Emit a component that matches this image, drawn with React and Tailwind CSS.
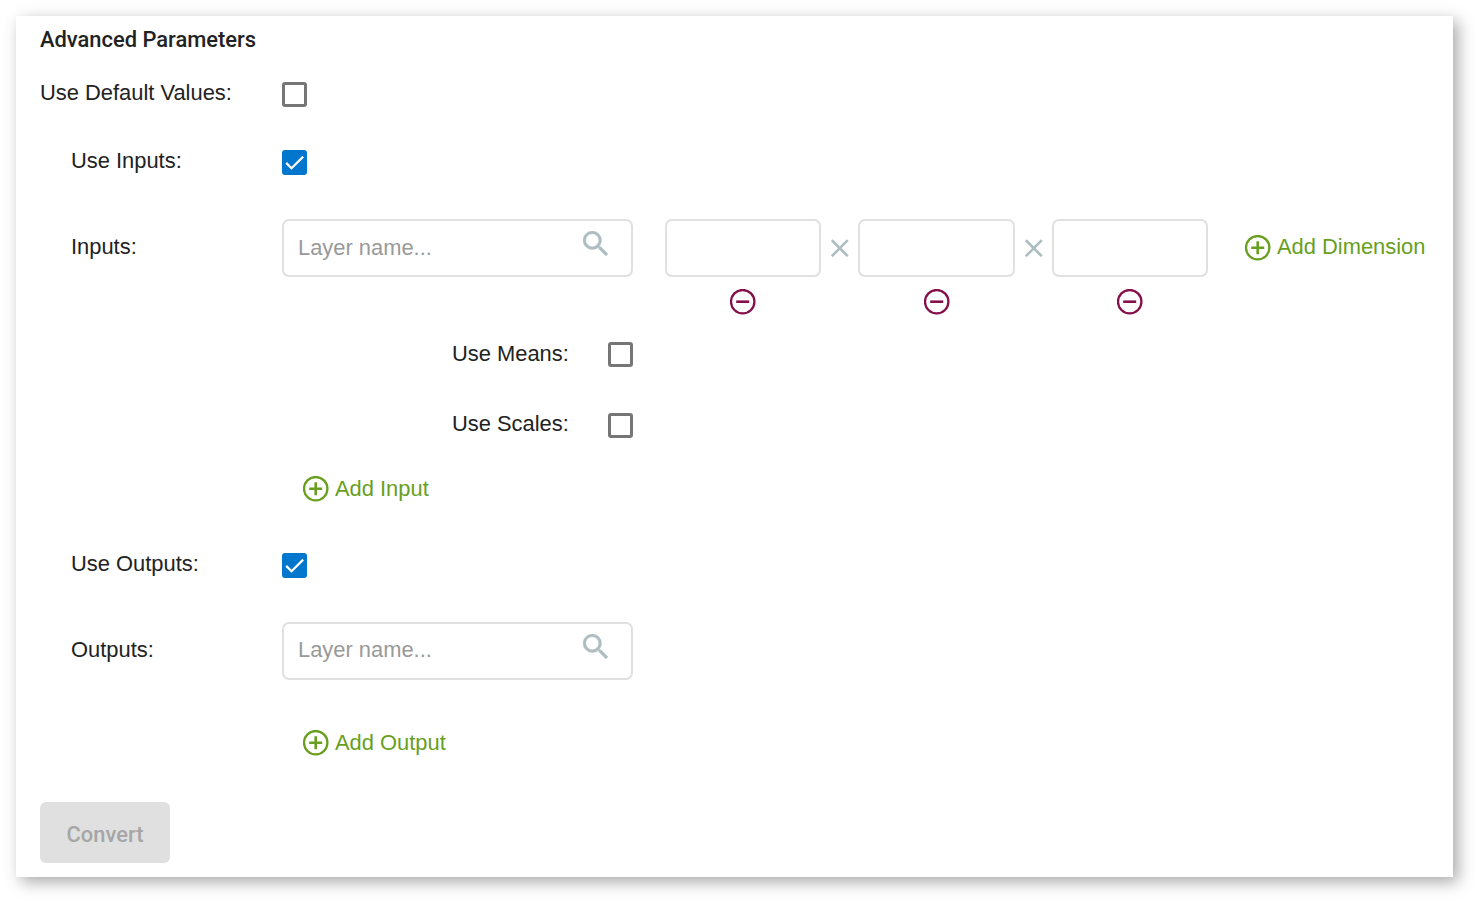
import React from "react";

function Checkbox({ checked }) {
  return checked ? (
    <span role="checkbox" aria-checked="true" className="flex size-[25px] shrink-0 items-center justify-center rounded-[3px] bg-[#0077cc]">
      <svg viewBox="0 0 25 25" className="size-[25px]" fill="none" stroke="#fff" strokeWidth="2.2">
        <path d="M4.2 12.9 9.5 18.2 21.2 6.6" />
      </svg>
    </span>
  ) : (
    <span role="checkbox" aria-checked="false" className="block size-[25px] shrink-0 rounded-[3px] border-3 border-[#767676] bg-white" />
  );
}

function CircleIcon({ plus }) {
  return (
    <svg viewBox="0 0 26 26" className="size-[26px] shrink-0" fill="none" stroke="currentColor">
      <circle cx="12.7" cy="12.7" r="11.7" strokeWidth="2.3" />
      <path d={plus ? "M6.2 12.7h13M12.7 6.2v13" : "M6.2 12.7h13"} strokeWidth="2.6" />
    </svg>
  );
}

function AddButton({ className = "", children }) {
  return (
    <button className="flex items-center gap-[6px] text-[#689f1e]">
      <CircleIcon plus />
      <span className={`whitespace-nowrap ${className}`}>{children}</span>
    </button>
  );
}

function Times() {
  return (
    <svg viewBox="0 0 18 18" className="size-[18px] shrink-0" fill="none" stroke="#aebdc2" strokeWidth="2.6">
      <path d="M.8 1.2 16.8 17.2M16.8 1.2.8 17.2" />
    </svg>
  );
}

function LayerField({ className = "" }) {
  return (
    <div className="flex h-[58px] w-[351px] shrink-0 items-center justify-between rounded-[7px] border-2 border-[#e0e0e0] pr-[23px] pl-[14px]">
      <span className={`text-[#999] ${className}`}>Layer name...</span>
      <svg viewBox="3 3 17.49 17.49" className="mb-[10px] size-[25px]" fill="#aebdc2" stroke="#aebdc2" strokeWidth="0.25">
        <path d="M15.5 14h-.79l-.28-.27A6.471 6.471 0 0 0 16 9.5 6.5 6.5 0 1 0 9.5 16c1.61 0 3.09-.59 4.23-1.57l.27.28v.79l5 4.99L20.49 19l-4.99-5zm-6 0C7.01 14 5 11.99 5 9.5S7.01 5 9.5 5 14 7.01 14 9.5 11.99 14 9.5 14z" />
      </svg>
    </div>
  );
}

function Label({ className, children }) {
  return (
    <div className={className}>
      <span className="whitespace-nowrap">{children}</span>
    </div>
  );
}

const DIMENSIONS = ["w-[156px]", "w-[157px]", "w-[156px]"];

export default function App() {
  return (
    <div className="h-[901px] w-[1477px] overflow-hidden bg-white p-4 font-['Liberation_Sans',Arial,sans-serif] text-[21.9px] leading-[26px] text-[#222]">
      <main className="h-[861px] w-[1437px] bg-white px-6 shadow-[5px_5px_15px_rgba(0,0,0,0.34)]">
        <h1 className="flex h-12 items-center font-[Roboto,sans-serif] font-medium">Advanced Parameters</h1>

        <div className="flex h-[61px] items-center">
          <Label className="w-[242px] pb-1">Use Default Values:</Label>
          <Checkbox />
        </div>

        <section className="pl-[31px]">
          <div className="flex h-[75px] items-center">
            <Label className="w-[211px] pb-1">Use Inputs:</Label>
            <Checkbox checked />
          </div>
          <div className="mt-[19px] flex h-[58px] items-center">
            <Label className="w-[211px] pb-[2px]">Inputs:</Label>
            <LayerField />
            <div className="ml-8 flex items-center">
              {DIMENSIONS.map((width, i) => (
                <React.Fragment key={i}>
                  {i > 0 && (
                    <span className="flex w-[37px] justify-center">
                      <Times />
                    </span>
                  )}
                  <span className={`${width} h-[58px] rounded-[7px] border-2 border-[#e0e0e0]`} />
                </React.Fragment>
              ))}
            </div>
            <div className="ml-[37px]">
              <AddButton className="pb-[2px]">Add Dimension</AddButton>
            </div>
          </div>
          <div className="mt-[12px] -mb-px flex h-[26px] gap-[37px] pl-[594px] text-[#850f4b]">
            {DIMENSIONS.map((width, i) => (
              <span key={i} className={`${width} flex justify-center`}>
                <CircleIcon />
              </span>
            ))}
          </div>
          <div className="flex h-[81px] items-center pl-[381px]">
            <Label className="w-[156px] pb-[2px]">Use Means:</Label>
            <Checkbox />
          </div>
          <div className="flex h-[61px] items-center pl-[381px]">
            <Label className="w-[156px] pb-1">Use Scales:</Label>
            <Checkbox />
          </div>
          <div className="flex h-[65px] items-center pl-[232px]">
            <AddButton>Add Input</AddButton>
          </div>
        </section>

        <section className="pl-[31px]">
          <div className="flex h-[89px] items-center">
            <Label className="w-[211px] pb-1">Use Outputs:</Label>
            <Checkbox checked />
          </div>
          <div className="mt-3 flex h-[58px] items-center">
            <Label className="w-[211px] pb-[2px]">Outputs:</Label>
            <LayerField className="pb-[2px]" />
          </div>
          <div className="flex h-[122px] items-center pt-[3px] pl-[232px]">
            <AddButton>Add Output</AddButton>
          </div>
        </section>

        <button className="flex h-[61px] w-[130px] items-center justify-center rounded-[6px] bg-[#e0e0e0] pt-1 font-[Roboto,sans-serif] font-medium text-[#a6a6a6]">
          Convert
        </button>
      </main>
    </div>
  );
}
